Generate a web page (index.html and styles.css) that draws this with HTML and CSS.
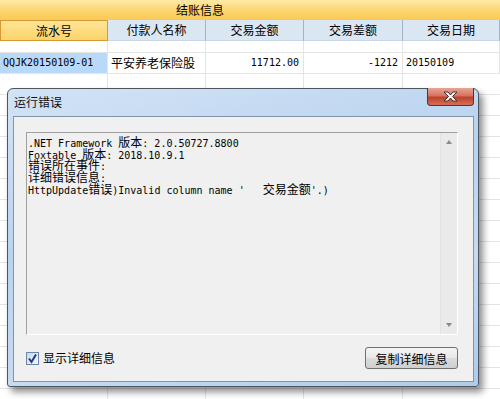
FILE: index.html
```html
<!DOCTYPE html>
<html lang="zh-CN">
<head>
  <meta charset="UTF-8" />
  <title>结账信息</title>
  <link rel="stylesheet" href="styles.css">
</head>
<body>
  <div class="sheet">
    <div class="caption">结账信息</div>
    <div class="grid">
      <div class="cell head current">流水号</div>
      <div class="cell head">付款人名称</div>
      <div class="cell head">交易金额</div>
      <div class="cell head">交易差额</div>
      <div class="cell head">交易日期</div>

      <div class="cell blank"></div><div class="cell blank"></div><div class="cell blank"></div><div class="cell blank"></div><div class="cell blank"></div>

      <div class="cell en selected">QQJK20150109-01</div>
      <div class="cell">平安养老保险股</div>
      <div class="cell en num">11712.00</div>
      <div class="cell en num">-1212</div>
      <div class="cell en">20150109</div>
    </div>
    <div class="filler"></div>
  </div>

  <div class="dialog">
    <div class="titlebar">
      <span class="title">运行错误</span>
      <button class="close" type="button">
        <svg width="17" height="11" viewBox="0 0 17 11">
          <path d="M2 1h4l2.5 3 2.5-3h4l-4.5 4.5 4.5 4.5h-4l-2.5-3-2.5 3h-4l4.5-4.5z" fill="#fff" stroke="#4a2a2a" stroke-width="1" stroke-linejoin="round"/>
        </svg>
      </button>
    </div>
    <div class="client">
      <div class="textbox">
        <div class="lines">
          <div>.NET Framework <span class="zh">版本</span>: 2.0.50727.8800</div>
          <div>Foxtable <span class="zh">版本</span>: 2018.10.9.1</div>
          <div><span class="zh">错误所在事件</span>:</div>
          <div><span class="zh">详细错误信息</span>:</div>
          <div>HttpUpdate<span class="zh">错误</span>)Invalid column name '   <span class="zh">交易金额</span>'.)</div>
        </div>
        <div class="scroll">
          <span class="arrow up"></span>
          <span class="arrow down"></span>
        </div>
      </div>
      <div class="footer">
        <label class="check">
          <span class="box">
            <svg width="11" height="11" viewBox="0 0 11 11">
              <path d="M2 5.5l2.5 3.5 4.5-7.5" fill="none" stroke="#1f3a8a" stroke-width="2"/>
            </svg>
          </span>
          显示详细信息
        </label>
        <button class="copy" type="button">复制详细信息</button>
      </div>
    </div>
  </div>
</body>
</html>
```

FILE: styles.css
```css
body {
  margin: 0;
  width: 500px;
  height: 399px;
  overflow: hidden;
  background: #fff;
  font-family: "Noto Sans CJK SC", sans-serif;
  font-size: 12px;
  color: #000;
}
.sheet {
  width: 500px;
  height: 399px;
  overflow: hidden;
}
.caption {
  height: 20px;
  line-height: 20px;
  padding-left: 176px;
  background: linear-gradient(#feeaa6, #fbd36a 60%, #f9c955);
}
.grid {
  display: grid;
  grid-template-columns: 108px 98px 98px 99px 97px;
  grid-template-rows: 21px 12px;
  grid-auto-rows: 21px;
}
.cell {
  box-sizing: border-box;
  border-right: 1px solid #e4e4e4;
  border-bottom: 1px solid #e4e4e4;
  line-height: 20px;
  padding: 0 3px;
  white-space: nowrap;
  overflow: hidden;
}
.head {
  text-align: center;
  background: #dbe6f3;
  border-right: 1px solid #9fb3c9;
  border-bottom: 1px solid #c9d6e4;
}
.head.current {
  background: linear-gradient(#ffe596, #fbd36b);
  border: 1px solid #d59a32;
  line-height: 19px;
}
.en {
  font-family: "DejaVu Sans Mono", monospace;
  font-size: 10px;
}
.num {
  text-align: right;
  padding-right: 4px;
}
.selected {
  background: #b9d9fb;
}
.filler {
  height: 326px;
  background-image:
    linear-gradient(to right, transparent 107px, #e4e4e4 107px, #e4e4e4 108px, transparent 108px, transparent 205px, #e4e4e4 205px, #e4e4e4 206px, transparent 206px, transparent 303px, #e4e4e4 303px, #e4e4e4 304px, transparent 304px, transparent 402px, #e4e4e4 402px, #e4e4e4 403px, transparent 403px),
    linear-gradient(transparent 20px, #e4e4e4 20px);
  background-size: 500px 326px, 500px 21px;
  background-repeat: no-repeat, repeat;
}

.dialog {
  position: absolute;
  left: 7px;
  top: 88px;
  width: 472px;
  height: 299px;
  box-sizing: border-box;
  border: 1px solid #4d5560;
  border-radius: 6px 6px 3px 3px;
  background: linear-gradient(165deg, #d3e3f5, #b9d3ef 40%, #c6dbf2 70%, #aecbea);
  padding: 0 4px 4px 5px;
  box-shadow: 4px 5px 7px rgba(0, 0, 0, 0.45);
  display: flex;
  flex-direction: column;
}
.titlebar {
  height: 27px;
  display: flex;
  align-items: flex-start;
  justify-content: space-between;
}
.title {
  margin-top: 6px;
  margin-left: 1px;
  line-height: 14px;
  color: #111;
}
.close {
  width: 47px;
  height: 18px;
  margin-top: -1px;
  padding: 0;
  border: 1px solid #6b2a22;
  border-top: none;
  border-radius: 0 0 4px 4px;
  background: linear-gradient(#e6a697, #d6735f 45%, #c0412c 55%, #d2705a);
  display: flex;
  align-items: center;
  justify-content: center;
}
.client {
  flex: 1;
  background: #f0f0f0;
  border: 1px solid #8294aa;
  padding: 15px 15px 0 12px;
  display: flex;
  flex-direction: column;
}
.textbox {
  height: 203px;
  box-sizing: border-box;
  border: 1px solid #a0a0a0;
  border-right-color: #fff;
  border-bottom-color: #fff;
  background: #f0f0f0;
  display: flex;
}
.lines {
  flex: 1;
  padding: 3px 0 0 1px;
  font-family: "DejaVu Sans Mono", monospace;
  font-size: 10px;
  line-height: 11.7px;
}
.lines div {
  height: 11.7px;
  white-space: pre;
}
.zh {
  font-family: "Noto Sans CJK SC", sans-serif;
  font-size: 12px;
  line-height: 11.7px;
}
.scroll {
  width: 16px;
  background: #eaeaea;
  border-left: 1px solid #e2e2e2;
  display: flex;
  flex-direction: column;
  justify-content: space-between;
  align-items: center;
  padding: 7px 0;
}
.arrow {
  width: 0;
  height: 0;
  border-left: 3px solid transparent;
  border-right: 3px solid transparent;
}
.arrow.up {
  border-bottom: 4px solid #8a8a8a;
}
.arrow.down {
  border-top: 4px solid #8a8a8a;
}
.footer {
  margin-top: 12px;
  display: flex;
  justify-content: space-between;
  align-items: center;
}
.check {
  display: flex;
  align-items: center;
  gap: 4px;
  line-height: 14px;
}
.box {
  width: 13px;
  height: 13px;
  box-sizing: border-box;
  border: 1px solid #6b86a8;
  background: linear-gradient(135deg, #c8d8ea, #f5f8fb);
  display: flex;
  align-items: center;
  justify-content: center;
}
.copy {
  width: 93px;
  height: 22px;
  padding: 0;
  border: 1px solid #707070;
  border-radius: 3px;
  background: linear-gradient(#f4f4f4, #e8e8e8 50%, #dcdcdc 51%, #cfcfcf);
  font-family: "Noto Sans CJK SC", sans-serif;
  font-size: 12px;
  color: #000;
}
```
